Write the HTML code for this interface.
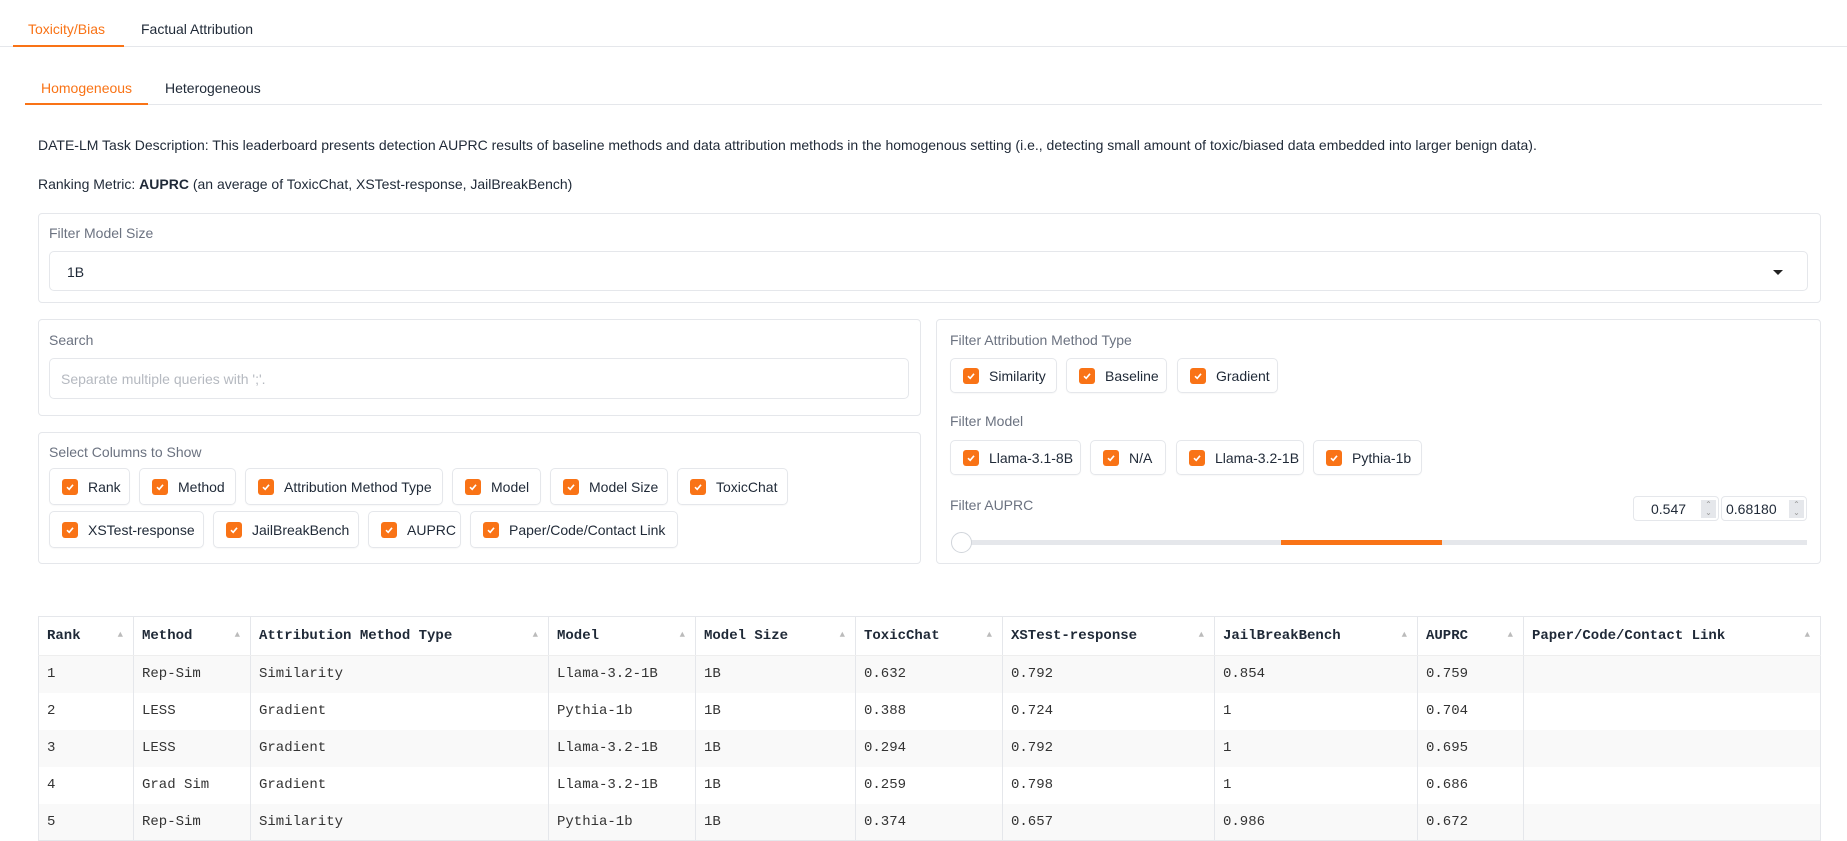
<!DOCTYPE html>
<html><head><meta charset="utf-8"><style>
*{box-sizing:border-box;margin:0;padding:0}
body{width:1847px;height:840px;overflow:hidden;background:#fff;font-family:"Liberation Sans",Arial,sans-serif;color:#1f2937;position:relative}
.a{position:absolute}
.tab{font-size:14px;white-space:nowrap}
.box{position:absolute;border:1px solid #e5e7eb;border-radius:4px;background:#fff}
.lbl{position:absolute;font-size:14px;color:#6b7280;white-space:nowrap}
.chip{position:absolute;height:37px;border:1px solid #e5e7eb;border-radius:5px;display:flex;align-items:center;padding-left:12px;font-size:14px;color:#1f2937;white-space:nowrap;box-shadow:0 1px 1px rgba(0,0,0,.03)}
.cb{width:16px;height:16px;border-radius:3px;background:#f97316;margin-right:10px;display:flex;align-items:center;justify-content:center;flex:none}
.cb svg{width:10px;height:10px}
table{position:absolute;left:38px;top:616px;width:1783px;border-collapse:collapse;font-family:"Liberation Mono",monospace;font-size:14px;table-layout:fixed;border:1px solid #e5e7eb}
td,th{border-left:1px solid #e5e7eb;border-right:1px solid #e5e7eb;text-align:left;padding:0 8px;white-space:nowrap;overflow:hidden}
th{height:39px;font-weight:bold;position:relative;border-bottom:1px solid #eee}
th span{position:absolute;right:10px;top:13px;font-size:9px;color:#bbb}
td{height:37px;color:#333}
tr.o td{background:#f9f9f9}
.num{position:absolute;top:496px;height:25px;border:1px solid #e5e7eb;border-radius:4px;font-size:14px;display:flex;align-items:center}
.sp{position:absolute;right:2px;top:3px;width:15px;height:18px;background:#e5e7eb;color:#999;font-size:8px;line-height:8px;text-align:center;padding-top:1px}
</style></head><body>
<div class="a tab" style="left:28px;top:21px;color:#f97316">Toxicity/Bias</div>
<div class="a tab" style="left:141px;top:21px">Factual Attribution</div>
<div class="a" style="left:0;top:46px;width:1847px;height:1px;background:#e5e7eb"></div>
<div class="a" style="left:13px;top:45px;width:111px;height:2px;background:#f97316"></div>

<div class="a tab" style="left:41px;top:80px;color:#f97316">Homogeneous</div>
<div class="a tab" style="left:165px;top:80px">Heterogeneous</div>
<div class="a" style="left:25px;top:104px;width:1797px;height:1px;background:#e5e7eb"></div>
<div class="a" style="left:25px;top:103px;width:123px;height:2px;background:#f97316"></div>

<div class="a" style="left:38px;top:137px;font-size:14px;white-space:nowrap">DATE-LM Task Description: This leaderboard presents detection AUPRC results of baseline methods and data attribution methods in the homogenous setting (i.e., detecting small amount of toxic/biased data embedded into larger benign data).</div>
<div class="a" style="left:38px;top:176px;font-size:14px;white-space:nowrap">Ranking Metric: <b>AUPRC</b> (an average of ToxicChat, XSTest-response, JailBreakBench)</div>

<div class="box" style="left:38px;top:213px;width:1783px;height:90px"></div>
<div class="lbl" style="left:49px;top:225px">Filter Model Size</div>
<div class="box" style="left:49px;top:251px;width:1759px;height:40px;border-radius:5px"></div>
<div class="a" style="left:67px;top:264px;font-size:14px">1B</div>
<div class="a" style="left:1773px;top:270px;width:0;height:0;border-left:5px solid transparent;border-right:5px solid transparent;border-top:5px solid #222"></div>

<div class="box" style="left:38px;top:319px;width:883px;height:97px"></div>
<div class="lbl" style="left:49px;top:332px">Search</div>
<div class="box" style="left:49px;top:358px;width:860px;height:41px;border-radius:5px"></div>
<div class="a" style="left:61px;top:371px;font-size:14px;color:#b5b9c0">Separate multiple queries with ';'.</div>

<div class="box" style="left:38px;top:432px;width:883px;height:132px"></div>
<div class="lbl" style="left:49px;top:444px">Select Columns to Show</div>

<div class="box" style="left:936px;top:319px;width:885px;height:245px"></div>
<div class="lbl" style="left:950px;top:332px">Filter Attribution Method Type</div>
<div class="lbl" style="left:950px;top:413px">Filter Model</div>
<div class="lbl" style="left:950px;top:497px">Filter AUPRC</div>

<div class="num" style="left:1633px;width:86px;justify-content:flex-start;padding-left:17px">0.547<div class="sp">⌃<br>⌄</div></div>
<div class="num" style="left:1721px;width:86px;padding-left:4px">0.68180<div class="sp">⌃<br>⌄</div></div>
<div class="a" style="left:952px;top:540px;width:855px;height:5px;background:#e5e7eb"></div>
<div class="a" style="left:1281px;top:540px;width:161px;height:5px;background:#f97316"></div>
<div class="a" style="left:951px;top:532px;width:21px;height:21px;border-radius:50%;background:#fff;border:1px solid #d1d5db"></div>

<div class="chip" style="left:49px;top:468px;width:81px"><div class="cb"><svg viewBox="0 0 10 10"><path d="M2 5.2L4.2 7.3 8 2.8" stroke="#fff" stroke-width="1.6" fill="none"/></svg></div>Rank</div>
<div class="chip" style="left:139px;top:468px;width:97px"><div class="cb"><svg viewBox="0 0 10 10"><path d="M2 5.2L4.2 7.3 8 2.8" stroke="#fff" stroke-width="1.6" fill="none"/></svg></div>Method</div>
<div class="chip" style="left:245px;top:468px;width:198px"><div class="cb"><svg viewBox="0 0 10 10"><path d="M2 5.2L4.2 7.3 8 2.8" stroke="#fff" stroke-width="1.6" fill="none"/></svg></div>Attribution Method Type</div>
<div class="chip" style="left:452px;top:468px;width:89px"><div class="cb"><svg viewBox="0 0 10 10"><path d="M2 5.2L4.2 7.3 8 2.8" stroke="#fff" stroke-width="1.6" fill="none"/></svg></div>Model</div>
<div class="chip" style="left:550px;top:468px;width:118px"><div class="cb"><svg viewBox="0 0 10 10"><path d="M2 5.2L4.2 7.3 8 2.8" stroke="#fff" stroke-width="1.6" fill="none"/></svg></div>Model Size</div>
<div class="chip" style="left:677px;top:468px;width:111px"><div class="cb"><svg viewBox="0 0 10 10"><path d="M2 5.2L4.2 7.3 8 2.8" stroke="#fff" stroke-width="1.6" fill="none"/></svg></div>ToxicChat</div>
<div class="chip" style="left:49px;top:511px;width:155px"><div class="cb"><svg viewBox="0 0 10 10"><path d="M2 5.2L4.2 7.3 8 2.8" stroke="#fff" stroke-width="1.6" fill="none"/></svg></div>XSTest-response</div>
<div class="chip" style="left:213px;top:511px;width:146px"><div class="cb"><svg viewBox="0 0 10 10"><path d="M2 5.2L4.2 7.3 8 2.8" stroke="#fff" stroke-width="1.6" fill="none"/></svg></div>JailBreakBench</div>
<div class="chip" style="left:368px;top:511px;width:93px"><div class="cb"><svg viewBox="0 0 10 10"><path d="M2 5.2L4.2 7.3 8 2.8" stroke="#fff" stroke-width="1.6" fill="none"/></svg></div>AUPRC</div>
<div class="chip" style="left:470px;top:511px;width:208px"><div class="cb"><svg viewBox="0 0 10 10"><path d="M2 5.2L4.2 7.3 8 2.8" stroke="#fff" stroke-width="1.6" fill="none"/></svg></div>Paper/Code/Contact Link</div>

<div class="chip" style="left:950px;top:358px;width:107px;height:35px"><div class="cb"><svg viewBox="0 0 10 10"><path d="M2 5.2L4.2 7.3 8 2.8" stroke="#fff" stroke-width="1.6" fill="none"/></svg></div>Similarity</div>
<div class="chip" style="left:1066px;top:358px;width:101px;height:35px"><div class="cb"><svg viewBox="0 0 10 10"><path d="M2 5.2L4.2 7.3 8 2.8" stroke="#fff" stroke-width="1.6" fill="none"/></svg></div>Baseline</div>
<div class="chip" style="left:1177px;top:358px;width:101px;height:35px"><div class="cb"><svg viewBox="0 0 10 10"><path d="M2 5.2L4.2 7.3 8 2.8" stroke="#fff" stroke-width="1.6" fill="none"/></svg></div>Gradient</div>

<div class="chip" style="left:950px;top:440px;width:131px;height:35px"><div class="cb"><svg viewBox="0 0 10 10"><path d="M2 5.2L4.2 7.3 8 2.8" stroke="#fff" stroke-width="1.6" fill="none"/></svg></div>Llama-3.1-8B</div>
<div class="chip" style="left:1090px;top:440px;width:76px;height:35px"><div class="cb"><svg viewBox="0 0 10 10"><path d="M2 5.2L4.2 7.3 8 2.8" stroke="#fff" stroke-width="1.6" fill="none"/></svg></div>N/A</div>
<div class="chip" style="left:1176px;top:440px;width:128px;height:35px"><div class="cb"><svg viewBox="0 0 10 10"><path d="M2 5.2L4.2 7.3 8 2.8" stroke="#fff" stroke-width="1.6" fill="none"/></svg></div>Llama-3.2-1B</div>
<div class="chip" style="left:1313px;top:440px;width:109px;height:35px"><div class="cb"><svg viewBox="0 0 10 10"><path d="M2 5.2L4.2 7.3 8 2.8" stroke="#fff" stroke-width="1.6" fill="none"/></svg></div>Pythia-1b</div>

<table>
<colgroup><col style="width:95px"><col style="width:117px"><col style="width:298px"><col style="width:147px"><col style="width:160px"><col style="width:147px"><col style="width:212px"><col style="width:203px"><col style="width:106px"><col></colgroup>
<tr><th>Rank<span>▲</span></th><th>Method<span>▲</span></th><th>Attribution Method Type<span>▲</span></th><th>Model<span>▲</span></th><th>Model Size<span>▲</span></th><th>ToxicChat<span>▲</span></th><th>XSTest-response<span>▲</span></th><th>JailBreakBench<span>▲</span></th><th>AUPRC<span>▲</span></th><th>Paper/Code/Contact Link<span>▲</span></th></tr>
<tr class="o"><td>1</td><td>Rep-Sim</td><td>Similarity</td><td>Llama-3.2-1B</td><td>1B</td><td>0.632</td><td>0.792</td><td>0.854</td><td>0.759</td><td></td></tr>
<tr><td>2</td><td>LESS</td><td>Gradient</td><td>Pythia-1b</td><td>1B</td><td>0.388</td><td>0.724</td><td>1</td><td>0.704</td><td></td></tr>
<tr class="o"><td>3</td><td>LESS</td><td>Gradient</td><td>Llama-3.2-1B</td><td>1B</td><td>0.294</td><td>0.792</td><td>1</td><td>0.695</td><td></td></tr>
<tr><td>4</td><td>Grad Sim</td><td>Gradient</td><td>Llama-3.2-1B</td><td>1B</td><td>0.259</td><td>0.798</td><td>1</td><td>0.686</td><td></td></tr>
<tr class="o"><td>5</td><td>Rep-Sim</td><td>Similarity</td><td>Pythia-1b</td><td>1B</td><td>0.374</td><td>0.657</td><td>0.986</td><td>0.672</td><td></td></tr>
</table>
</body></html>
